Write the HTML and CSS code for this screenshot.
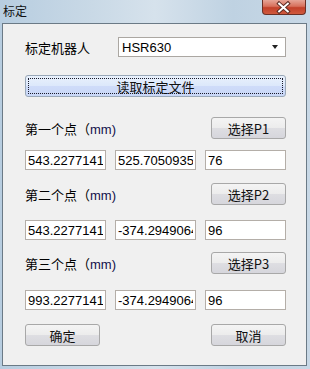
FILE: index.html
```html
<!DOCTYPE html>
<html lang="zh-CN">
<head>
    <meta charset="UTF-8">
    <title>标定</title>
    <link rel="stylesheet" href="styles.css">
</head>
<body>
    <div class="window">
        <div class="titlebar">
            <span class="title">标定</span>
            <div class="close-btn">
                <svg width="44" height="15" viewBox="0 0 44 15">
                    <path d="M17.5 3.5 L26.5 11.5 M26.5 3.5 L17.5 11.5" stroke="#5a2a22" stroke-width="4" stroke-linecap="square"/>
                    <path d="M17.5 3.5 L26.5 11.5 M26.5 3.5 L17.5 11.5" stroke="#ffffff" stroke-width="2" stroke-linecap="square"/>
                </svg>
            </div>
        </div>
        <div class="client">
            <div class="row robot-row">
                <span class="label">标定机器人</span>
                <div class="combo">
                    <span>HSR630</span>
                    <span class="arrow"></span>
                </div>
            </div>

            <button class="btn btn-read"><span class="focus">读取标定文件</span></button>

            <div class="row point-row p1">
                <span class="label">第一个点（<span class="unit">mm)</span></span>
                <button class="btn btn-pick">选择P1</button>
            </div>
            <div class="inputs in1">
                <input class="field" type="text" value="543.2277141">
                <input class="field" type="text" value="525.7050935">
                <input class="field" type="text" value="76">
            </div>

            <div class="row point-row p2">
                <span class="label">第二个点（<span class="unit">mm)</span></span>
                <button class="btn btn-pick">选择P2</button>
            </div>
            <div class="inputs in2">
                <input class="field" type="text" value="543.2277141">
                <input class="field" type="text" value="-374.2949064">
                <input class="field" type="text" value="96">
            </div>

            <div class="row point-row p3">
                <span class="label">第三个点（<span class="unit">mm)</span></span>
                <button class="btn btn-pick">选择P3</button>
            </div>
            <div class="inputs in3">
                <input class="field" type="text" value="993.2277141">
                <input class="field" type="text" value="-374.2949064">
                <input class="field" type="text" value="96">
            </div>

            <div class="row footer">
                <button class="btn btn-pick">确定</button>
                <button class="btn btn-pick">取消</button>
            </div>
        </div>
    </div>
</body>
</html>
```
FILE: styles.css
```css
html, body {
    margin: 0;
    padding: 0;
}
body {
    width: 310px;
    height: 369px;
    overflow: hidden;
    font-family: "Noto Sans CJK SC", "Liberation Sans", sans-serif;
    font-size: 12px;
    color: #000;
}
.window {
    width: 310px;
    height: 369px;
    box-sizing: border-box;
    padding: 0 3px 3px 2px;
    display: flex;
    flex-direction: column;
    background: linear-gradient(90deg, #b7cde0 0%, #c9d9e6 30%, #d6e2ec 50%, #bfd2e2 75%, #c8d8e6 100%);
}
.titlebar {
    height: 23px;
    display: flex;
    justify-content: space-between;
    align-items: flex-start;
}
.title {
    margin: 2px 0 0 1px;
    font-size: 12px;
    color: #111;
}
.close-btn {
    width: 44px;
    height: 15px;
    margin-right: 1px;
    box-sizing: border-box;
    border: 1px solid #6a3026;
    border-top: none;
    border-radius: 0 0 4px 4px;
    background: linear-gradient(#e6a597 0%, #d7705c 45%, #c2402a 55%, #d05a3e 100%);
    display: flex;
    overflow: hidden;
}
.close-btn svg {
    margin-left: -1px;
}
.client {
    flex: 1;
    border: 1px solid #6b7a86;
    background: #f0f0f0;
    padding: 0 20px 0 22px;
    display: flex;
    flex-direction: column;
}
.row {
    display: flex;
    align-items: center;
    justify-content: space-between;
}
.robot-row {
    margin-top: 13px;
}
.robot-row .label {
    font-size: 13px;
}
.combo {
    width: 168px;
    height: 20px;
    box-sizing: border-box;
    border: 1px solid #aba7a2;
    background: #fff;
    display: flex;
    align-items: center;
    justify-content: space-between;
    padding: 0 7px 0 3px;
    font-family: "Liberation Sans", sans-serif;
    font-size: 13px;
}
.arrow {
    width: 0;
    height: 0;
    border-left: 3px solid transparent;
    border-right: 3px solid transparent;
    border-top: 4px solid #222;
}
.btn {
    box-sizing: border-box;
    border: 1px solid #a8a8a8;
    border-radius: 3px;
    background: linear-gradient(#f4f4f4 0%, #ececec 50%, #dedee2 51%, #d6d6dc 100%);
    font-family: "Noto Sans CJK SC", sans-serif;
    font-size: 13px;
    color: #111;
    padding: 0;
    margin: 0;
}
.btn-read {
    margin-top: 18px;
    width: 261px;
    height: 22px;
    border-color: #9aa8b8;
    background: linear-gradient(#e9f1fc 0%, #dce8fb 50%, #cfdcf9 51%, #c8d7f7 100%);
    padding: 2px;
}
.btn-read .focus {
    display: flex;
    height: 100%;
    box-sizing: border-box;
    border: 1px dotted #1a1a2a;
    align-items: center;
    justify-content: center;
}
.btn-pick {
    width: 75px;
    height: 22px;
}
.point-row .label {
    font-size: 13px;
}
.unit {
    font-family: "Liberation Sans", sans-serif;
    font-size: 13px;
    color: #10104a;
}
.p1 { margin-top: 20px; }
.p2 { margin-top: 13px; }
.p3 { margin-top: 12px; }
.inputs {
    display: flex;
    gap: 9px;
}
.in1 { margin-top: 11px; }
.in2 { margin-top: 15px; }
.in3 { margin-top: 16px; }
.field {
    width: 81px;
    height: 20px;
    box-sizing: border-box;
    border: 1px solid #b4aea8;
    background: #fff;
    padding: 0 2px;
    margin: 0;
    font-family: "Liberation Sans", sans-serif;
    font-size: 13px;
    color: #000;
    outline: none;
}
.footer {
    margin-top: 14px;
}
```
